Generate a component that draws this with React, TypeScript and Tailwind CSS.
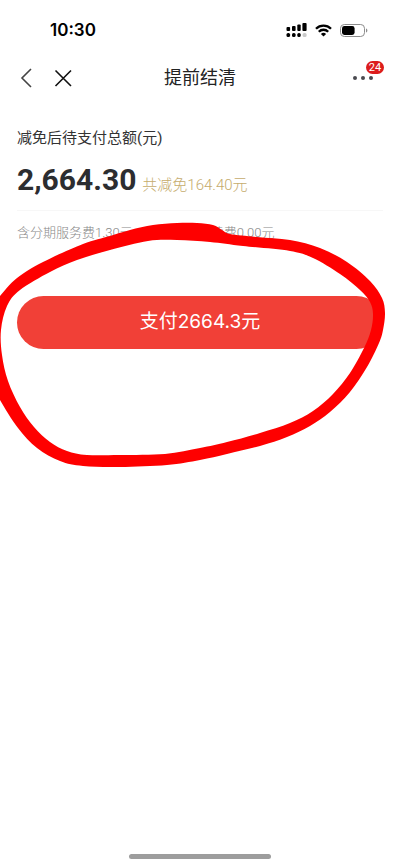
type Point = [number, number];

const outerEdge: Point[] = [
  [-5, 303], [0, 296], [17, 278], [43, 262], [83, 244], [110, 236], [130, 230], [153, 225], [177, 223],
  [197, 223], [213, 225], [222, 230], [230, 234], [257, 237], [290, 240], [320, 248], [347, 262],
  [370, 281], [382, 298], [385, 313], [383, 330], [379, 343], [367, 367], [350, 392], [330, 412],
  [310, 426], [287, 437], [260, 446], [227, 454], [200, 460], [167, 465], [120, 467], [83, 466],
  [60, 461], [37, 448], [18, 428], [0, 400], [-5, 388],
];

const innerEdge: Point[] = [
  [1, 330], [7, 306], [20, 290], [50, 272], [77, 260], [110, 250], [148, 241], [177, 240], [210, 242],
  [243, 246], [290, 251], [313, 258], [340, 274], [360, 290], [370, 302], [373, 314], [371, 330],
  [364, 348], [350, 373], [333, 394], [313, 411], [290, 423], [260, 433], [227, 442], [200, 448],
  [165, 454], [120, 455], [87, 455], [67, 451], [50, 442], [34, 427], [20, 407], [8, 381], [2, 355],
];

// closed curve running through every point
function smoothPath(points: Point[]) {
  const n = points.length;
  let d = `M${points[0][0]} ${points[0][1]}`;
  for (let i = 0; i < n; i++) {
    const a = points[(i - 1 + n) % n];
    const b = points[i];
    const c = points[(i + 1) % n];
    const e = points[(i + 2) % n];
    d += `C${b[0] + (c[0] - a[0]) / 6} ${b[1] + (c[1] - a[1]) / 6} ${c[0] - (e[0] - b[0]) / 6} ${c[1] - (e[1] - b[1]) / 6} ${c[0]} ${c[1]}`;
  }
  return d + "Z";
}

function SignalIcon() {
  return (
    <svg width="21" height="14" viewBox="0 0 21 14" aria-hidden="true">
      <rect x="0.5" y="4" width="3.6" height="4" rx="1" />
      <rect x="6" y="3" width="3.6" height="5" rx="1" />
      <rect x="11.3" y="1.5" width="3.4" height="6.5" rx="1" />
      <rect x="16.4" y="0" width="4.2" height="8" rx="1" />
      <rect x="0.5" y="10" width="3.6" height="4" rx="1.6" />
      <rect x="6" y="10" width="3.6" height="4" rx="1.6" />
      <rect x="11.3" y="10" width="3.4" height="4" rx="1.6" />
      <rect x="16.6" y="10" width="4" height="4" rx="1.6" fill="#c9c9c9" />
    </svg>
  );
}

function WifiIcon() {
  return (
    <svg width="17" height="13" viewBox="0 0 17 13" aria-hidden="true">
      <g fill="none" stroke="#000" strokeWidth="2.3">
        <path d="M1 4.7a10.6 10.6 0 0 1 15 0" />
        <path d="M3.8 7.7a6.7 6.7 0 0 1 9.4 0" />
      </g>
      <path d="M8.5 12.6 5.9 10a3.7 3.7 0 0 1 5.2 0z" />
    </svg>
  );
}

function BatteryIcon() {
  return (
    <svg width="28" height="13" viewBox="0 0 28 13" aria-hidden="true">
      <rect x="0.5" y="0.5" width="24" height="12" rx="3.8" fill="none" stroke="#8c8c8c" />
      <rect x="2" y="2" width="12.6" height="9" rx="2.4" />
      <path d="M26 4.5c1.8.5 1.8 3.5 0 4z" fill="#8c8c8c" />
    </svg>
  );
}

function StatusBar() {
  return (
    <div className="flex h-[54px] items-center justify-between pt-1.5 pr-8 pl-[50px]">
      <span className="font-[Inter,sans-serif] text-[17px] leading-6 font-semibold text-black">10:30</span>
      <div className="flex items-center gap-2">
        <SignalIcon />
        <WifiIcon />
        <BatteryIcon />
      </div>
    </div>
  );
}

function NavBar() {
  return (
    <header className="grid h-12 grid-cols-[1fr_auto_1fr] items-center px-4">
      <div className="flex items-center gap-4">
        <button type="button" aria-label="返回" className="text-[#444]">
          <svg width="20" height="22" viewBox="0 0 20 22" fill="none" stroke="currentColor" strokeWidth="1.6">
            <path d="M15 2 6 11l9 9" />
          </svg>
        </button>
        <button type="button" aria-label="关闭" className="text-[#111]">
          <svg width="22" height="22" viewBox="0 0 22 22" fill="none" stroke="currentColor" strokeWidth="1.6">
            <path d="m3.5 3.5 15.5 15.5M19 3.5 3.5 19" />
          </svg>
        </button>
      </div>
      <h1 className="text-lg text-[#222]">提前结清</h1>
      <button type="button" aria-label="更多" className="relative mr-2 justify-self-end p-0.5">
        <svg width="22" height="6" viewBox="0 0 22 6" fill="#4a4a50">
          <circle cx="3" cy="3" r="2" />
          <circle cx="11" cy="3" r="2" />
          <circle cx="19" cy="3" r="2" />
        </svg>
        <span className="absolute -top-3 -right-2 flex h-[13px] w-[18px] items-center justify-center rounded-full bg-[#dc1c1c] font-[Roboto,sans-serif] text-[11px] leading-3 text-white">
          24
        </span>
      </button>
    </header>
  );
}

export default function App() {
  return (
    <div className="relative flex min-h-screen flex-col overflow-hidden bg-white font-[Roboto,'Noto_Sans_CJK_SC',sans-serif]">
      <StatusBar />
      <NavBar />

      <main className="flex-1 px-[17px] pt-[26px]">
        <h2 className="text-[15px] leading-5 text-[#333]">减免后待支付总额(元)</h2>
        <div className="mt-3 flex items-baseline gap-1.5 border-b border-[#f7f7f7] pb-2.5">
          <span className="text-[30px] leading-10 font-bold text-[#2c2d30]">2,664.30</span>
          <span className="text-[15px] leading-5 font-light text-[#c5ab6c]">共减免164.40元</span>
        </div>
        <p className="mt-3 text-[13px] leading-5 font-light text-[#888]">
          含分期服务费1.30元，提前结清手续费0.00元
        </p>
        <button
          type="button"
          className="mt-[53px] h-[53px] w-full rounded-full bg-[#f14037] font-[Inter,'Noto_Sans_CJK_SC',sans-serif] text-[19px] text-white"
        >
          支付2664.3元
        </button>
      </main>

      <div className="mx-auto mb-2 h-[5px] w-[142px] rounded-full bg-[#9d9d9d]" />

      {/* hand-drawn circle round the pay button */}
      <svg
        className="pointer-events-none absolute top-0 left-0"
        width="400"
        height="480"
        viewBox="0 0 400 480"
        aria-hidden="true"
      >
        <path d={smoothPath(outerEdge) + smoothPath(innerEdge)} fill="#fe0000" fillRule="evenodd" />
      </svg>
    </div>
  );
}
